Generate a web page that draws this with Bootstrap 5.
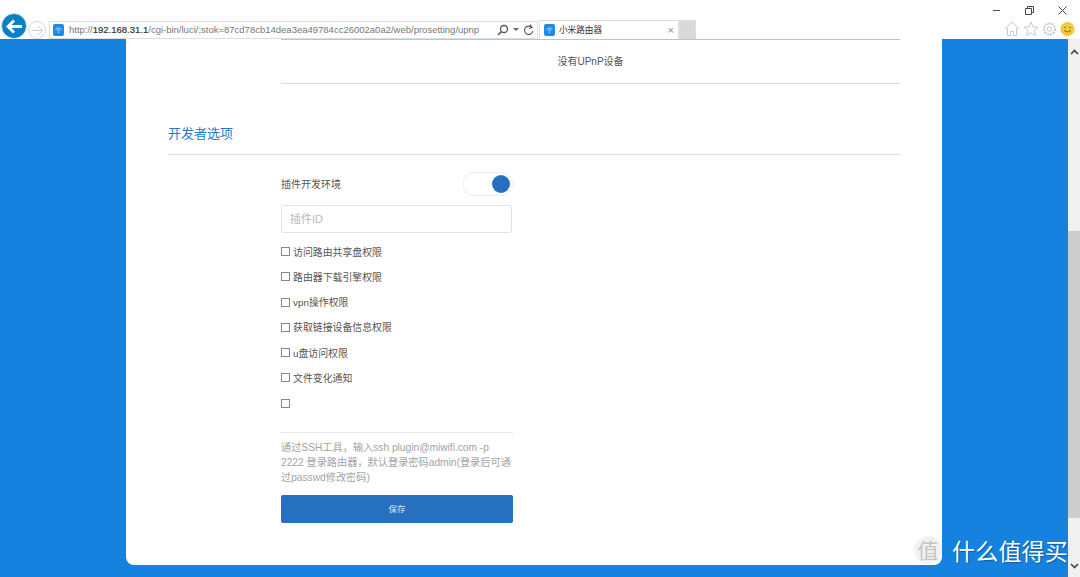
<!DOCTYPE html>
<html lang="zh-CN">
<head>
    <meta charset="UTF-8">
    <meta name="viewport" content="width=device-width, initial-scale=1.0">
    <title>小米路由器</title>
    <link href="https://cdn.jsdelivr.net/npm/bootstrap@5.3.0/dist/css/bootstrap.min.css" rel="stylesheet">
    <style>
        html, body { height: 577px; overflow: hidden; }
        body { font-family: "Liberation Sans", "Noto Sans CJK SC", sans-serif; font-size: 10px; color: #555; background: #fff; }
        .win-top { height: 20px; padding-right: 13px; gap: 24px; }
        .win-bar { height: 19px; }
        .back-btn { width: 26px; height: 26px; margin: -5px 0 0 1px; border-radius: 50%; background: #0a7fc4; border: 1px solid #d5e7f2; position: relative; z-index: 2; flex: none; }
        .fwd-btn { width: 18px; height: 18px; margin: 0 3px 0 1px; border-radius: 50%; border: 1px solid #d6d6d6; flex: none; }
        .addr-box { width: 489px; height: 18px; border: 1px solid #dedede; padding: 0 3px; flex: none; background: #fff; }
        .addr-text { font-size: 9.5px; color: #777; white-space: nowrap; margin-left: 5px; width: 412px; }
        .addr-text b { color: #333; font-weight: 400; -webkit-text-stroke: .2px #333; }
        .fav-ico { width: 11px; height: 12px; border-radius: 2px; background: #1a8cf0; flex: none; }
        .tab-box { width: 140px; height: 19px; margin-left: 1px; border: 1px solid #dedede; border-bottom: 0; padding: 0 4px; flex: none; font-size: 8.6px; color: #333; }
        .tab-title { margin-left: 0; }
        .tab-new { width: 17px; height: 19px; background: #d9d9d9; border: 1px solid #dedede; border-bottom: 0; flex: none; }
        .tab-x { color: #888; font-size: 11px; }
        .tool-ico { position: absolute; top: 20px; left: 1004px; }
        .page-wrap { height: 538px; }
        .blue-area { background: #1682e0; padding: 0 126px 12px; flex: 1; min-width: 0; }
        .sheet { background: #fff; height: 526px; border-radius: 0 0 8px 8px; padding-left: 42px; padding-right: 42px; }
        .upnp-box { margin-left: 113px; height: 45px; border-top: 1px solid #a5c8ee; border-bottom: 1px solid #ddd; font-size: 10px; color: #555; }
        .dev-title { font-size: 13px; line-height: 16px; color: #2a78c6; margin-top: 42px; padding-bottom: 12px; border-bottom: 1px solid #ddd; font-weight: 400; margin-bottom: 0; }
        .dev-form { width: 232px; margin-left: 113px; }
        .switch-row { height: 24px; margin-top: 17px; color: #555; }
        .fake-switch { width: 51px; height: 24px; border: 1px solid #eee; border-radius: 12px; background: #fff; padding: 0 2px; }
        .fake-knob { width: 18px; height: 18px; border-radius: 50%; background: #2670bf; }
        .id-input { display: block; width: 231px; height: 28px; border: 1px solid #e2e2e2; border-radius: 3px; margin-top: 9px; padding: 0 8px; font-size: 11px; font-family: inherit; background: #fff; }
        .id-input::placeholder { color: #bbb; }
        .perm-list { margin-top: 7.300px; }
        .perm-item { height: 25.300px; gap: 3px; color: #555; font-size: 9.900px; }
        .perm-box { width: 9px; height: 9px; margin-bottom: 3px; border: 1px solid #888; flex: none; background: #fff; }
        .form-rule { border-top: 1px solid #e6e6e6; margin-top: 14.700px; }
        .help-text { margin: 7px 0 0; font-size: 10.200px; line-height: 15px; color: #a3a3a3; width: 232px; }
        .save-btn { width: 232px; height: 28px; margin-top: 10px; background: #2670bf; border: 0; border-radius: 2px; color: #dce8f5; font-size: 8.500px; padding: 0; display: block; }
        .scroll-rail { width: 12px; background: #f0f0f0; flex: none; }
        .rail-up { margin-top: 10px; }
        .scroll-thumb { height: 287px; margin-top: 176px; background: #cdcdcd; }
        .rail-down { margin-top: 45px; }
        .watermark { position: absolute; left: 914px; top: 536px; gap: 10px; color: #fff; font-size: 23px; line-height: 28px; font-family: "Noto Sans CJK SC", sans-serif; white-space: nowrap; }
        .wm-seal { width: 28px; height: 28px; border-radius: 50%; background: #f2f2f2; color: #c4c4c4; font-size: 21px; text-align: center; line-height: 27px; }
        .wm-text { text-shadow: 1px 1px 1px rgba(0,0,0,.3); letter-spacing: .2px; }
    </style>
</head>
<body>

    <div class="d-flex justify-content-end align-items-center win-top">
        <svg width="9" height="9" viewBox="0 0 9 9"><path d="M1 4.500h7" stroke="#555" fill="none"/></svg>
        <svg width="9" height="9" viewBox="0 0 9 9"><path d="M.5 2.500h6v6h-6zM2.500 2.500v-2h6v6h-2" stroke="#444" fill="none"/></svg>
        <svg width="9" height="9" viewBox="0 0 9 9"><path d="M.5.5l8 8M8.500.5l-8 8" stroke="#444" fill="none"/></svg>
    </div>

    <div class="d-flex align-items-end win-bar">
        <div class="back-btn d-flex align-items-center justify-content-center">
            <svg width="17" height="15" viewBox="0 0 17 15"><path d="M8 1.500L2 7.500l6 6M2.500 7.500H16" stroke="#fff" stroke-width="2.800" fill="none"/></svg>
        </div>
        <div class="fwd-btn d-flex align-items-center justify-content-center">
            <svg width="11" height="11" viewBox="0 0 11 11"><path d="M6 1l4.500 4.500L6 10M0 5.500h10" stroke="#ccc" fill="none"/></svg>
        </div>
        <div class="addr-box d-flex align-items-center">
            <div class="fav-ico d-flex align-items-center justify-content-center">
                <svg width="7" height="6" viewBox="0 0 7 6"><path d="M.5 2q3-2 6 0M1.800 3.500q1.700-1.200 3.400 0" stroke="#cfe6fb" stroke-width=".8" fill="none"/><circle cx="3.500" cy="5.200" r=".7" fill="#cfe6fb"/></svg>
            </div>
            <div class="addr-text">http://<b>192.168.31.1</b>/cgi-bin/luci/;stok=87cd78cb14dea3ea49784cc26002a0a2/web/prosetting/upnp</div>
            <svg class="ms-auto" width="12" height="12" viewBox="0 0 12 12"><circle cx="7" cy="5" r="3.500" stroke="#555" stroke-width="1.300" fill="none"/><path d="M4.500 7.500L1 11" stroke="#555" stroke-width="1.600"/></svg>
            <svg class="ms-1" width="6" height="4" viewBox="0 0 6 4"><path d="M0 0h6L3 3z" fill="#666"/></svg>
            <svg class="ms-1" width="11" height="12" viewBox="0 0 11 12"><path d="M8.800 3.500A4.200 4.200 0 1 0 9.800 7M7 .5l2 3-3 1" stroke="#555" stroke-width="1.100" fill="none"/></svg>
        </div>
        <div class="tab-box d-flex align-items-center gap-1">
            <div class="fav-ico d-flex align-items-center justify-content-center">
                <svg width="7" height="6" viewBox="0 0 7 6"><path d="M.5 2q3-2 6 0M1.800 3.500q1.700-1.200 3.400 0" stroke="#cfe6fb" stroke-width=".8" fill="none"/><circle cx="3.500" cy="5.200" r=".7" fill="#cfe6fb"/></svg>
            </div>
            <span class="tab-title">小米路由器</span>
            <span class="tab-x ms-auto">×</span>
        </div>
        <div class="tab-new"></div>
        <svg class="tool-ico" width="72" height="18" viewBox="0 0 72 18">
            <path d="M1 9l7-7 7 7M3.500 8v7.500h3v-4h3v4h3V8" stroke="#c8c8c8" fill="none"/>
            <path d="M27 2l2 4.800 5 .4-3.800 3.300 1.200 5L27 12.800l-4.400 2.700 1.200-5L20 7.200l5-.4z" stroke="#c8c8c8" fill="none"/>
            <circle cx="45.500" cy="9" r="5.500" stroke="#c8c8c8" stroke-width="2" stroke-dasharray="2 1" fill="none"/>
            <circle cx="45.500" cy="9" r="2.200" stroke="#c8c8c8" fill="none"/>
            <circle cx="63.500" cy="9" r="7" fill="#f4c93c"/>
            <path d="M60 10.500q3.500 3 7 0" stroke="#8a6d10" fill="none"/>
            <circle cx="61" cy="7.500" r=".8" fill="#8a6d10"/>
            <circle cx="66" cy="7.500" r=".8" fill="#8a6d10"/>
        </svg>
    </div>

    <div class="d-flex page-wrap">
        <div class="blue-area">
            <div class="sheet">
                <div class="upnp-box d-flex align-items-center justify-content-center">没有UPnP设备</div>

                <h2 class="dev-title">开发者选项</h2>

                <div class="dev-form">
                    <div class="switch-row d-flex align-items-center justify-content-between">
                        <span>插件开发环境</span>
                        <div class="fake-switch d-flex align-items-center justify-content-end">
                            <div class="fake-knob"></div>
                        </div>
                    </div>
                    <input class="id-input" type="text" placeholder="插件ID">
                    <div class="perm-list">
                        <div class="perm-item d-flex align-items-center"><span class="perm-box"></span>访问路由共享盘权限</div>
                        <div class="perm-item d-flex align-items-center"><span class="perm-box"></span>路由器下载引擎权限</div>
                        <div class="perm-item d-flex align-items-center"><span class="perm-box"></span>vpn操作权限</div>
                        <div class="perm-item d-flex align-items-center"><span class="perm-box"></span>获取链接设备信息权限</div>
                        <div class="perm-item d-flex align-items-center"><span class="perm-box"></span>u盘访问权限</div>
                        <div class="perm-item d-flex align-items-center"><span class="perm-box"></span>文件变化通知</div>
                        <div class="perm-item d-flex align-items-center"><span class="perm-box"></span></div>
                    </div>
                    <div class="form-rule"></div>
                    <p class="help-text">通过SSH工具，输入ssh plugin@miwifi.com -p 2222 登录路由器，默认登录密码admin(登录后可通过passwd修改密码)</p>
                    <button class="save-btn" type="button">保存</button>
                </div>
            </div>
        </div>
        <div class="scroll-rail">
            <svg class="d-block mx-auto rail-up" width="9" height="6" viewBox="0 0 9 6"><path d="M1 5l3.500-3.500L8 5" stroke="#444" stroke-width="1.600" fill="none"/></svg>
            <div class="scroll-thumb"></div>
            <svg class="d-block mx-auto rail-down" width="9" height="6" viewBox="0 0 9 6"><path d="M1 1l3.500 3.500L8 1" stroke="#444" stroke-width="1.600" fill="none"/></svg>
        </div>
    </div>

    <div class="watermark d-flex align-items-center">
        <div class="wm-seal">值</div>
        <div class="wm-text">什么值得买</div>
    </div>

    <script src="https://cdn.jsdelivr.net/npm/bootstrap@5.3.0/dist/js/bootstrap.bundle.min.js"></script>
</body>
</html>
